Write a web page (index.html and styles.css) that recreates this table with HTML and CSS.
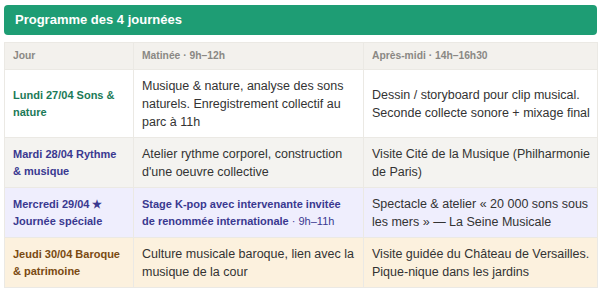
FILE: index.html
```html
<!DOCTYPE html>
<html lang="fr">
<head>
<meta charset="utf-8">
<title>Programme des 4 journées</title>
<link rel="stylesheet" href="styles.css">
</head>
<body>
<div class="page">
  <div class="title-bar">Programme des 4 journées</div>
  <table class="program">
    <colgroup>
      <col class="c-day">
      <col class="c-am">
      <col class="c-pm">
    </colgroup>
    <thead>
      <tr>
        <th>Jour</th>
        <th>Matinée · 9h–12h</th>
        <th>Après-midi · 14h–16h30</th>
      </tr>
    </thead>
    <tbody>
      <tr class="r-nature">
        <td class="day">Lundi 27/04 Sons &amp; nature</td>
        <td>Musique &amp; nature, analyse des sons naturels. Enregistrement collectif au parc à 11h</td>
        <td>Dessin / storyboard pour clip musical. Seconde collecte sonore + mixage final</td>
      </tr>
      <tr class="r-rythme">
        <td class="day">Mardi 28/04 Rythme &amp; musique</td>
        <td>Atelier rythme corporel, construction d'une oeuvre collective</td>
        <td>Visite Cité de la Musique (Philharmonie de Paris)</td>
      </tr>
      <tr class="r-special">
        <td class="day">Mercredi 29/04 ★ Journée spéciale</td>
        <td class="highlight"><strong>Stage K-pop avec intervenante invitée de renommée internationale</strong> · 9h–11h</td>
        <td>Spectacle &amp; atelier « 20 000 sons sous les mers » — La Seine Musicale</td>
      </tr>
      <tr class="r-baroque">
        <td class="day">Jeudi 30/04 Baroque &amp; patrimoine</td>
        <td>Culture musicale baroque, lien avec la musique de la cour</td>
        <td>Visite guidée du Château de Versailles. Pique-nique dans les jardins</td>
      </tr>
    </tbody>
  </table>
</div>
</body>
</html>
```
FILE: styles.css
```css
html, body {
  margin: 0;
  padding: 0;
  background: #ffffff;
}
body {
  font-family: "Liberation Sans", Arial, sans-serif;
  color: #333333;
}
.page {
  padding: 5px 3px 0 4px;
  display: flex;
  flex-direction: column;
  gap: 7px;
}
.title-bar {
  background: #1e9d74;
  color: #ffffff;
  font-weight: bold;
  font-size: 13px;
  line-height: 30px;
  height: 30px;
  padding: 0 11px;
  border-radius: 4px;
}
.program {
  width: 593px;
  border-collapse: collapse;
  table-layout: fixed;
  font-size: 12.5px;
  line-height: 18px;
}
.c-day { width: 129px; }
.c-am { width: 230px; }
.c-pm { width: 234px; }
.program th,
.program td {
  border: 1px solid #ebe9e4;
  text-align: left;
  vertical-align: middle;
}
.program th {
  background: #f3f1ed;
  color: #8a8884;
  font-size: 10.3px;
  font-weight: bold;
  line-height: 14px;
  padding: 6px 8px;
}
.program td {
  padding: 7px 5px 6px 8px;
}
.program .day {
  font-weight: bold;
  font-size: 11px;
  line-height: 17px;
  padding-right: 10px;
}
.r-nature { background: #ffffff; }
.r-nature .day { color: #1b7a57; }
.r-rythme { background: #f4f3f0; }
.r-rythme .day { color: #3a3990; }
.r-special { background: #efeefd; }
.r-special .day { color: #3a3990; }
.r-special .highlight {
  color: #3a3990;
  font-size: 11px;
  line-height: 17px;
  padding-right: 14px;
}
.r-special .highlight strong { font-weight: bold; }
.r-baroque { background: #fcf1de; }
.r-baroque .day { color: #7a4a12; }
```
